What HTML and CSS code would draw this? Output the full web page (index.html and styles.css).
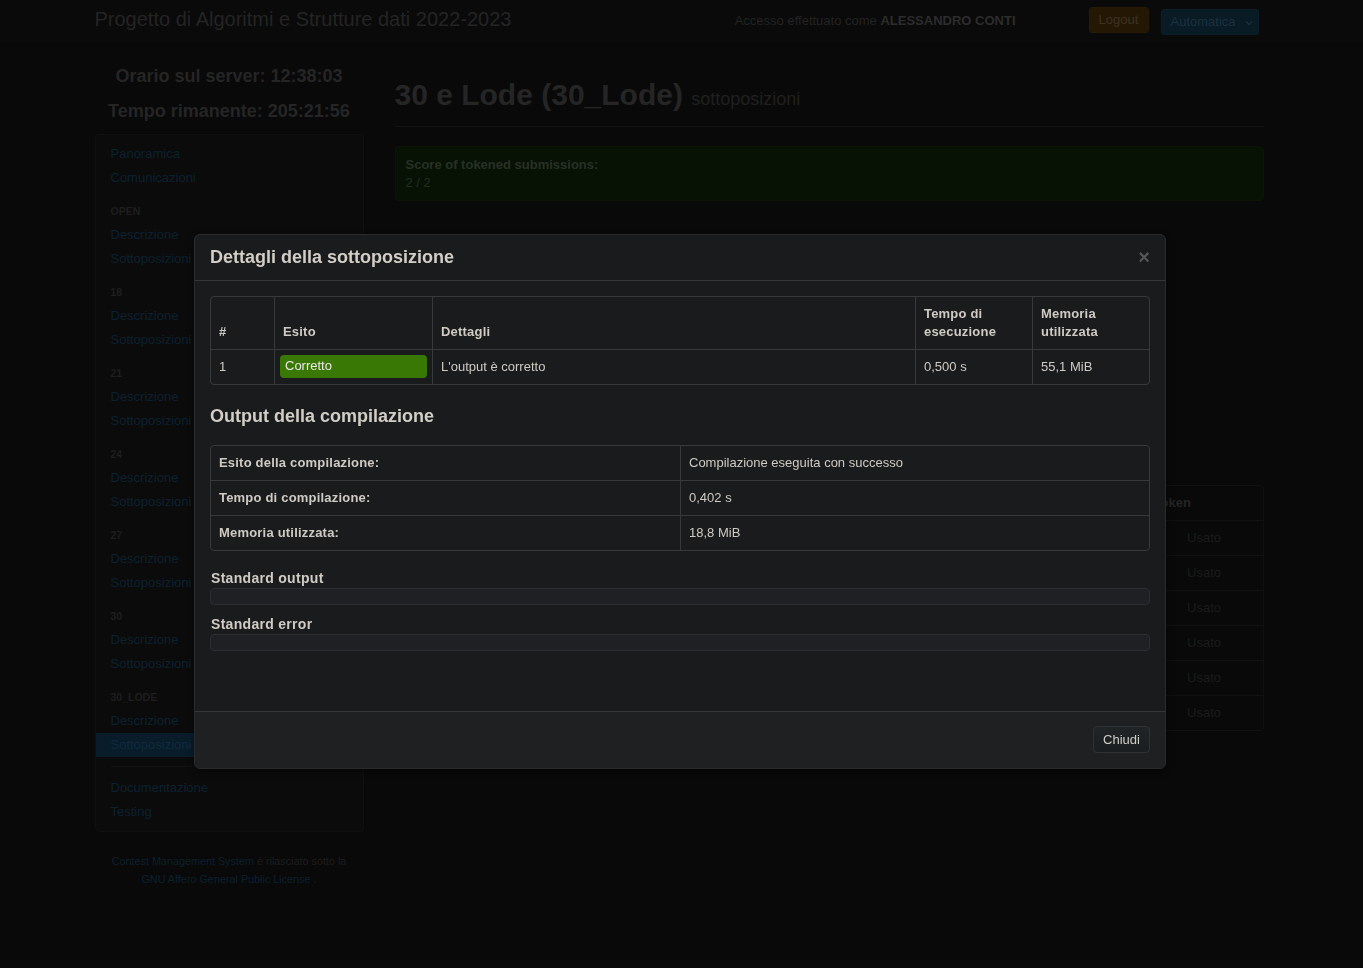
FILE: index.html
```html
<!DOCTYPE html>
<html lang="it">
<head>
<meta charset="utf-8">
<title>Progetto di Algoritmi e Strutture dati 2022-2023</title>
<link rel="stylesheet" href="styles.css">
</head>
<body>
<header class="navbar">
  <div class="container nav-inner">
    <a class="brand">Progetto di Algoritmi e Strutture dati 2022-2023</a>
    <div class="nav-right">
      <span class="login-info">Accesso effettuato come <b>ALESSANDRO CONTI</b></span>
      <button class="btn-logout">Logout</button>
      <button class="btn-lang">Automatica <svg class="chev" width="8" height="6" viewBox="0 0 8 6"><polyline points="1,1.5 4,4.5 7,1.5" fill="none" stroke="currentColor" stroke-width="1.3"/></svg></button>
    </div>
  </div>
</header>

<div class="container page">
  <aside class="sidebar">
    <div class="clock">Orario sul server: 12:38:03</div>
    <div class="clock">Tempo rimanente: 205:21:56</div>
    <nav class="well">
      <ul class="nav-list">
        <li><a>Panoramica</a></li>
        <li><a>Comunicazioni</a></li>
        <li class="nav-header">open</li>
        <li><a>Descrizione</a></li>
        <li><a>Sottoposizioni</a></li>
        <li class="nav-header">18</li>
        <li><a>Descrizione</a></li>
        <li><a>Sottoposizioni</a></li>
        <li class="nav-header">21</li>
        <li><a>Descrizione</a></li>
        <li><a>Sottoposizioni</a></li>
        <li class="nav-header">24</li>
        <li><a>Descrizione</a></li>
        <li><a>Sottoposizioni</a></li>
        <li class="nav-header">27</li>
        <li><a>Descrizione</a></li>
        <li><a>Sottoposizioni</a></li>
        <li class="nav-header">30</li>
        <li><a>Descrizione</a></li>
        <li><a>Sottoposizioni</a></li>
        <li class="nav-header">30_lode</li>
        <li><a>Descrizione</a></li>
        <li class="active"><a>Sottoposizioni</a></li>
        <li class="divider"></li>
        <li><a>Documentazione</a></li>
        <li><a>Testing</a></li>
      </ul>
    </nav>
    <footer class="cms-footer">
      <a>Contest Management System</a> è rilasciato sotto la<br>
      <a>GNU Affero General Public License</a> .
    </footer>
  </aside>

  <main class="content">
    <div class="page-header">
      <h1>30 e Lode (30_Lode) <small>sottoposizioni</small></h1>
    </div>
    <div class="alert">
      <div class="alert-title">Score of tokened submissions:</div>
      <div>2 / 2</div>
    </div>
    <table class="bg-table">
      <thead>
        <tr><th></th><th></th><th></th><th class="tok">Token</th></tr>
      </thead>
      <tbody>
        <tr><td></td><td></td><td></td><td class="tok">Usato</td></tr>
        <tr><td></td><td></td><td></td><td class="tok">Usato</td></tr>
        <tr><td></td><td></td><td></td><td class="tok">Usato</td></tr>
        <tr><td></td><td></td><td></td><td class="tok">Usato</td></tr>
        <tr><td></td><td></td><td></td><td class="tok">Usato</td></tr>
        <tr><td></td><td></td><td></td><td class="tok">Usato</td></tr>
      </tbody>
    </table>
  </main>
</div>

<div class="modal">
  <div class="modal-header">
    <h3 class="modal-title">Dettagli della sottoposizione</h3>
    <span class="close">×</span>
  </div>
  <div class="modal-body">
    <table class="tbl tbl-eval">
      <thead>
        <tr>
          <th class="c1">#</th>
          <th class="c2">Esito</th>
          <th class="c3">Dettagli</th>
          <th class="c4">Tempo di esecuzione</th>
          <th class="c5">Memoria utilizzata</th>
        </tr>
      </thead>
      <tbody>
        <tr>
          <td>1</td>
          <td class="badge-cell"><span class="badge">Corretto</span></td>
          <td>L'output è corretto</td>
          <td>0,500 s</td>
          <td>55,1 MiB</td>
        </tr>
      </tbody>
    </table>

    <h3 class="section-title">Output della compilazione</h3>
    <table class="tbl tbl-comp">
      <tbody>
        <tr><th>Esito della compilazione:</th><td>Compilazione eseguita con successo</td></tr>
        <tr><th>Tempo di compilazione:</th><td>0,402 s</td></tr>
        <tr><th>Memoria utilizzata:</th><td>18,8 MiB</td></tr>
      </tbody>
    </table>

    <h4 class="out-label">Standard output</h4>
    <pre class="out-box"></pre>
    <h4 class="out-label">Standard error</h4>
    <pre class="out-box"></pre>
  </div>
  <div class="modal-footer">
    <button class="btn-close">Chiudi</button>
  </div>
</div>
</body>
</html>
```

FILE: styles.css
```css
* { box-sizing: border-box; }

html, body { margin: 0; padding: 0; }

body {
  background: #090909;
  font-family: "Liberation Sans", Arial, Helvetica, sans-serif;
  font-size: 13px;
  line-height: 18px;
  color: #222;
  min-height: 968px;
}

a { text-decoration: none; cursor: pointer; }

.container {
  width: 1174px;
  margin: 0 auto;
}

/* ---------- navbar ---------- */
.navbar {
  height: 42px;
  background: #0a0a0a;
}

.nav-inner {
  display: flex;
  align-items: center;
  height: 42px;
}

.brand {
  font-size: 20px;
  line-height: 24px;
  color: #242424;
  padding-bottom: 4px;
}

.nav-right {
  margin-left: auto;
  margin-right: 10px;
  display: flex;
  align-items: center;
  height: 42px;
}

.login-info {
  color: #232323;
  margin-right: 73px;
}

.login-info b { color: #2c2c2c; }

.btn-logout,
.btn-lang {
  font-family: "Liberation Sans", Arial, sans-serif;
  font-size: 13px;
  line-height: 18px;
  border-radius: 3px;
  border: 1px solid transparent;
}

.btn-logout {
  background: #241804;
  border-color: #271a06;
  color: #3d3222;
  width: 60px;
  padding: 3px 0;
  margin-bottom: 3px;
  margin-right: 12px;
}

.btn-lang {
  background: #091b25;
  border-color: #0b1e29;
  color: #1a3140;
  width: 98px;
  padding: 3px 0 3px 9px;
  text-align: left;
  margin-top: 2px;
  display: flex;
  align-items: center;
}

.chev { margin-left: 9px; margin-top: 1px; }

/* ---------- page layout ---------- */
.page {
  display: grid;
  grid-template-columns: 269px 869px;
  column-gap: 31px;
}

/* ---------- sidebar ---------- */
.sidebar { padding-top: 24px; }

.clock {
  font-size: 18px;
  line-height: 20px;
  font-weight: bold;
  text-align: center;
  color: #252525;
}

.clock + .clock { margin-top: 15px; }

.well {
  margin-top: 13px;
  background: #0b0b0b;
  border: 1px solid #101010;
  border-radius: 4px;
  padding: 7px 0 7px;
}

.nav-list {
  list-style: none;
  margin: 0;
  padding: 0 15px;
}

.nav-list a {
  display: block;
  padding: 3px 15px;
  margin: 0 -15px;
  line-height: 18px;
  color: #0c2130;
}

.nav-header {
  padding: 3px 0;
  margin-top: 9px;
  font-size: 10.5px;
  font-weight: bold;
  text-transform: uppercase;
  line-height: 18px;
  color: #1e1e1e;
}

.nav-list .active a {
  background: #081c2a;
  color: #102a3e;
}

.divider {
  height: 1px;
  background: #131313;
  margin: 9px 0;
}

.cms-footer {
  margin-top: 20px;
  text-align: center;
  font-size: 10.8px;
  line-height: 18px;
  color: #1e1e1e;
}

.cms-footer a { color: #0c202e; }

/* ---------- main content ---------- */
.page-header {
  padding-top: 33px;
  padding-bottom: 11px;
  border-bottom: 1px solid #131313;
}

.page-header h1 {
  margin: 0;
  height: 40px;
  font-size: 30px;
  line-height: 40px;
  font-weight: bold;
  color: #252525;
}

.page-header small {
  font-size: 18px;
  line-height: 0;
  font-weight: normal;
  color: #202020;
}

.alert {
  margin-top: 19px;
  background: #081204;
  border: 1px solid #0a1506;
  border-radius: 4px;
  padding: 9px 10px;
  color: #232d21;
  height: 55px;
}

.alert-title { font-weight: bold; color: #263124; }

.bg-table {
  margin-top: 284px;
  width: 100%;
  border-collapse: separate;
  border-spacing: 0;
  border: 1px solid #111;
  border-radius: 4px;
  table-layout: fixed;
}

.bg-table th,
.bg-table td {
  height: 35px;
  padding: 8px;
  line-height: 18px;
  border-top: 1px solid #111;
  border-left: 1px solid #111;
  text-align: left;
  color: #1a1a1a;
}

.bg-table th { font-weight: bold; color: #242424; }

.bg-table thead th { border-top: 0; height: 34px; }

.bg-table tr > :first-child { border-left: 0; }

.bg-table .tok { width: 118px; }

.bg-table td.tok { text-align: center; color: #1b1b1b; }

/* ---------- modal ---------- */
.modal {
  position: fixed;
  left: 194px;
  top: 234px;
  width: 972px;
  background: #1a1b1d;
  border: 1px solid #2a2b2d;
  border-radius: 6px;
  color: #cfcac3;
  box-shadow: 0 3px 7px rgba(0, 0, 0, 0.4);
}

.modal-header {
  display: flex;
  align-items: center;
  justify-content: space-between;
  padding: 11px 15px 12px;
  border-bottom: 1px solid #363739;
}

.modal-title {
  margin: 0;
  font-size: 18px;
  line-height: 22px;
  font-weight: bold;
  color: #d2cdc6;
}

.close {
  font-size: 20px;
  line-height: 20px;
  font-weight: bold;
  color: #555;
}

.modal-body {
  padding: 15px 15px 60px;
}

.tbl {
  width: 100%;
  border-collapse: separate;
  border-spacing: 0;
  border: 1px solid #38393b;
  border-radius: 4px;
  table-layout: fixed;
}

.tbl th,
.tbl td {
  padding: 8px;
  line-height: 18px;
  border-top: 1px solid #38393b;
  border-left: 1px solid #38393b;
  text-align: left;
  color: #cfcac3;
}

.tbl th { font-weight: bold; letter-spacing: 0.2px; }

.tbl tr > :first-child { border-left: 0; }

.tbl > :first-child > tr:first-child > * { border-top: 0; }

.tbl-eval thead th { vertical-align: bottom; }

.tbl-eval .c1 { width: 63px; }
.tbl-eval .c2 { width: 158px; }
.tbl-eval .c3 { width: 483px; }
.tbl-eval .c4 { width: 117px; }
.tbl-eval .c5 { width: 117px; }

.tbl-eval td { vertical-align: middle; }

.tbl-eval td.badge-cell { padding: 5px 5px 6px; }

.badge {
  display: block;
  height: 23px;
  padding: 2px 5px 3px;
  line-height: 18px;
  background: #3a7806;
  border-radius: 4px;
  color: #e8e8e6;
}

.section-title {
  margin: 19px 0 17px;
  font-size: 18px;
  line-height: 24px;
  font-weight: bold;
  color: #d2cdc6;
}

.tbl-comp th,
.tbl-comp td { width: 50%; vertical-align: middle; }

.out-label {
  margin: 17px 0 0;
  font-size: 14px;
  line-height: 20px;
  font-weight: bold;
  letter-spacing: 0.3px;
  padding-left: 1px;
  color: #d0cbc4;
}

.out-box + .out-label { margin-top: 9px; }

.out-box {
  margin: 0;
  height: 17px;
  background: #1f2023;
  border: 1px solid #2d2e31;
  border-radius: 4px;
}

.modal-footer {
  display: flex;
  justify-content: flex-end;
  padding: 14px 15px 15px;
  border-top: 1px solid #363739;
  background: #1f2022;
  border-radius: 0 0 6px 6px;
}

.btn-close {
  font-family: "Liberation Sans", Arial, sans-serif;
  font-size: 13px;
  line-height: 17px;
  padding: 4px 9px;
  height: 27px;
  width: 57px;
  color: #d0ccc6;
  background: linear-gradient(#212427, #1b1e20);
  border: 1px solid #303335;
  border-radius: 4px;
}
```
